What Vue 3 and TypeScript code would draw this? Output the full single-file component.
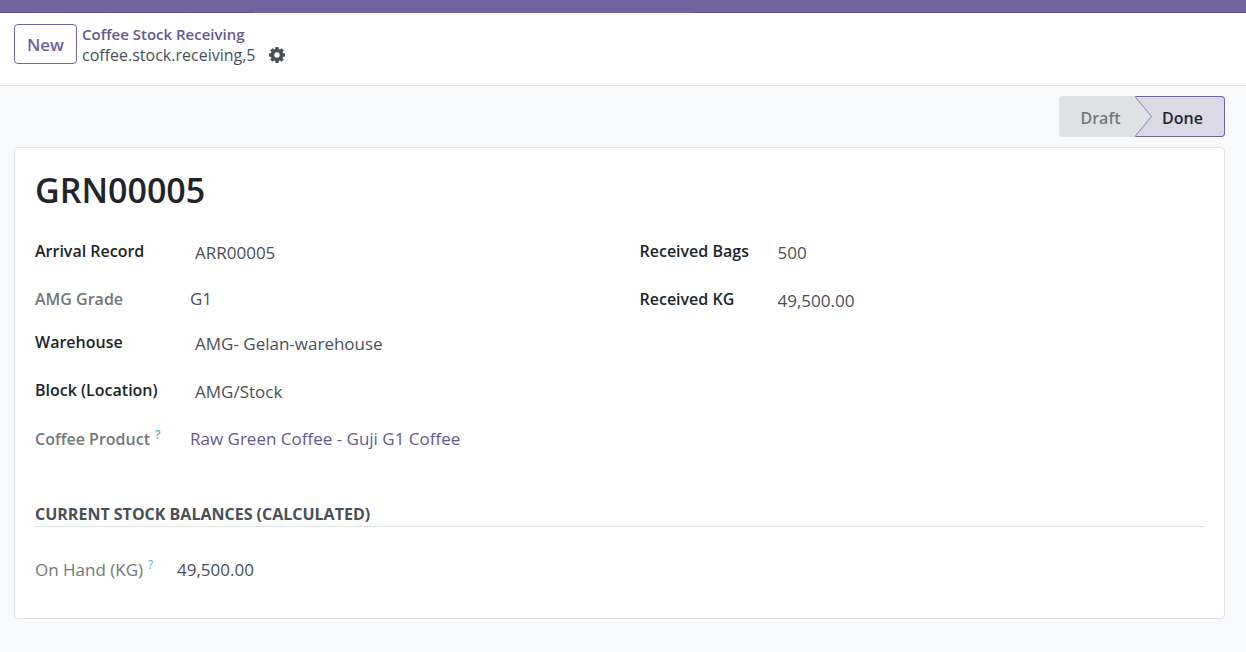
<script setup lang="ts">
interface Field {
  id: string
  label: string
  value: string
  kind: 'input' | 'text' | 'link'
  help?: boolean
}

const leftFields: Field[] = [
  { id: 'arrival', label: 'Arrival Record', value: 'ARR00005', kind: 'input' },
  { id: 'grade', label: 'AMG Grade', value: 'G1', kind: 'text' },
  { id: 'warehouse', label: 'Warehouse', value: 'AMG- Gelan-warehouse', kind: 'input' },
  { id: 'block', label: 'Block (Location)', value: 'AMG/Stock', kind: 'input' },
  { id: 'product', label: 'Coffee Product', value: 'Raw Green Coffee - Guji G1 Coffee', kind: 'link', help: true },
]
const rightFields: Field[] = [
  { id: 'bags', label: 'Received Bags', value: '500', kind: 'input' },
  { id: 'kg', label: 'Received KG', value: '49,500.00', kind: 'input' },
]
const groups = [
  { name: 'left', fields: leftFields },
  { name: 'right', fields: rightFields },
]
</script>

<template>
  <div class="page">
    <div class="navbar"></div>
    <header class="control-panel">
      <button type="button" class="new-btn">New</button>
      <nav class="breadcrumb">
        <a href="#" class="parent">Coffee Stock Receiving</a>
        <div class="current">
          <span>coffee.stock.receiving,5</span>
          <button type="button" class="gear" aria-label="Actions">
            <svg width="16" height="16" viewBox="0 0 16 16">
              <path
                fill="#495057"
                fill-rule="evenodd"
                d="M6.500 0h3l.4 2 1 .4 1.700-1.200 2.200 2.200-1.200 1.700.4 1 2 .4v3l-2 .4-.4 1 1.200 1.700-2.200 2.200-1.700-1.200-1 .4-.4 2h-3l-.4-2-1-.4-1.700 1.200-2.200-2.200 1.200-1.700-.4-1-2-.4v-3l2-.4.4-1-1.200-1.700 2.200-2.200 1.700 1.200 1-.4zM8 5.300a2.700 2.700 0 1 0 0 5.400 2.700 2.700 0 0 0 0-5.400z"
              />
            </svg>
          </button>
        </div>
      </nav>
    </header>

    <main class="content">
      <div class="statusbar">
        <button type="button" class="stage draft">Draft</button>
        <button type="button" class="stage done" aria-current="step">
          <svg class="arrow" width="19" height="41" viewBox="0 0 19 41">
            <path d="M0 0H1L17.500 20.500 1 41H0z" fill="#dee2e6" />
            <path d="M1 .5L17.500 20.500 1 40.500" fill="none" stroke="#8a7fb0" stroke-width="1" />
          </svg>
          Done
        </button>
      </div>

      <section class="sheet">
        <h1>GRN00005</h1>
        <div class="groups">
          <div v-for="g in groups" :key="g.name" class="group" :class="g.name">
            <div v-for="f in g.fields" :key="f.id" class="field" :class="f.kind">
              <label :for="f.id">{{ f.label }}<sup v-if="f.help">?</sup></label>
              <input v-if="f.kind === 'input'" :id="f.id" type="text" :value="f.value" />
              <a v-else-if="f.kind === 'link'" :id="f.id" href="#">{{ f.value }}</a>
              <output v-else :id="f.id">{{ f.value }}</output>
            </div>
          </div>
        </div>
        <h2>Current Stock Balances (Calculated)</h2>
        <div class="balance">
          <label for="onhand">On Hand (KG)<sup>?</sup></label>
          <output id="onhand">49,500.00</output>
        </div>
      </section>
    </main>
  </div>
</template>

<style>
html,
body {
  background: #f8f9fb;
}
</style>

<style scoped>
.page {
  min-height: 100vh;
  background: #f8f9fb;
  font-family: 'Open Sans', 'Noto Sans', sans-serif;
  font-size: 17px;
  line-height: 24px;
  color: #495057;
}
.page * {
  box-sizing: border-box;
}
button,
input {
  font: inherit;
  color: inherit;
}
a {
  text-decoration: none;
}
.navbar {
  height: 13px;
  background:
    linear-gradient(90deg, #5f5387 0 20.4%, #71639e 20.4% 55.5%, #5f5387 55.5%) bottom / 100% 1px no-repeat,
    #71639e;
}
.control-panel {
  display: flex;
  align-items: flex-start;
  gap: 5px;
  padding: 11px 14px 19px;
  background: #fff;
  border-bottom: 1px solid #dee2e6;
}
.new-btn {
  height: 40px;
  width: 63px;
  padding: 2px 0 0;
  border: 1px solid #71639e;
  border-radius: 4px;
  background: #fff;
  color: #71639e;
  font-weight: 600;
}
.breadcrumb {
  display: flex;
  flex-direction: column;
}
.parent {
  height: 20px;
  line-height: 20px;
  overflow: hidden;
  color: #66598f;
  font-size: 15px;
  font-weight: 600;
}
.current {
  display: flex;
  align-items: center;
  gap: 14px;
  height: 22px;
  font-size: 16px;
}
.gear {
  display: flex;
  padding: 0;
  border: 0;
  background: none;
}
.content {
  padding: 10px 21px 33px 14px;
}
.statusbar {
  display: flex;
  justify-content: flex-end;
}
.stage {
  height: 41px;
  border: 1px solid #dee2e6;
  background: #dee2e6;
  font-size: 16px;
  font-weight: 600;
}
.draft {
  width: 75px;
  padding: 2px 0 0 7px;
  border-right: 0;
  border-radius: 4px 0 0 4px;
  color: #73787d;
}
.done {
  position: relative;
  width: 91px;
  padding: 2px 0 0 7px;
  border-color: #71639e;
  border-left: 0;
  border-radius: 0 4px 4px 0;
  background: #dcd9e7;
  color: #212529;
}
.arrow {
  position: absolute;
  left: 0;
  top: -1px;
}
.sheet {
  margin-top: 10px;
  padding: 20px 20px 36px;
  border: 1px solid #dee2e6;
  border-radius: 4px;
  background: #fff;
}
h1 {
  margin: 0 0 27px;
  color: #212529;
  font-size: 34px;
  font-weight: 600;
  line-height: 44px;
}
.groups {
  display: grid;
  grid-template-columns: 1fr 1fr;
  gap: 40px;
}
.field {
  display: grid;
  grid-template-columns: 155px 1fr;
  min-height: 48px;
  align-items: start;
}
.right .field {
  grid-template-columns: 133px 1fr;
}
.field.text {
  min-height: 43px;
}
.field.link {
  padding-top: 1px;
}
.field label {
  color: #212529;
  font-size: 16px;
  font-weight: 600;
  white-space: nowrap;
}
.field.text label,
.field.link label {
  color: #73777b;
}
.field input {
  width: 100%;
  height: 26px;
  padding: 0 5px;
  border: 0;
  background: transparent;
  outline: 0;
}
.field a {
  color: #66598f;
}
sup {
  margin-left: 5px;
  color: #5bb0c8;
  font-size: 12px;
  line-height: 0;
}
h2 {
  margin: 28px 0 0;
  border-bottom: 1px solid #dee2e6;
  font-size: 16px;
  font-weight: 700;
  line-height: 24px;
  text-transform: uppercase;
}
.balance {
  display: grid;
  grid-template-columns: 142px 1fr;
  margin-top: 31px;
}
.balance label {
  color: #73777b;
}
</style>
